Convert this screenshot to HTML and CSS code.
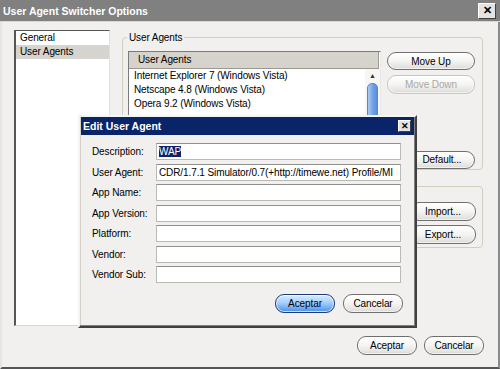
FILE: index.html
```html
<!DOCTYPE html>
<html>
<head>
<meta charset="utf-8">
<link rel="stylesheet" href="styles.css">
</head>
<body>
<div class="window">
  <div class="titlebar">
    <span class="title">User Agent Switcher Options</span>
    <span class="closebtn big">✕</span>
  </div>
  <div class="content">
    <div class="mainrow">
      <div class="sidebar">
        <div class="navitem">General</div>
        <div class="navitem selected">User Agents</div>
      </div>
      <div class="panel">
        <div class="group g1">
          <span class="legend">User Agents</span>
          <div class="listbox">
            <div class="listhead">User Agents</div>
            <div class="listbody">
              <div class="items">
                <div class="item">Internet Explorer 7 (Windows Vista)</div>
                <div class="item">Netscape 4.8 (Windows Vista)</div>
                <div class="item">Opera 9.2 (Windows Vista)</div>
              </div>
              <div class="scrollbar">
                <div class="arrow">▲</div>
                <div class="thumb"></div>
              </div>
            </div>
          </div>
          <div class="btncol">
            <button class="btn wide">Move Up</button>
            <button class="btn wide disabled">Move Down</button>
            <div class="spacer"></div>
            <button class="btn narrow">Default...</button>
          </div>
        </div>
        <div class="group g2">
          <div class="btncol">
            <button class="btn narrow">Import...</button>
            <button class="btn narrow">Export...</button>
          </div>
        </div>
      </div>
    </div>
    <div class="footer">
      <button class="btn">Aceptar</button>
      <button class="btn">Cancelar</button>
    </div>
  </div>

  <div class="dialog">
    <div class="dtitle">
      <span class="title small">Edit User Agent</span>
      <span class="closebtn small">✕</span>
    </div>
    <div class="form">
      <div class="row"><span class="label">Description:</span><div class="input"><span class="sel">WAP</span></div></div>
      <div class="row"><span class="label">User Agent:</span><div class="input">CDR/1.7.1 Simulator/0.7(+http://timewe.net) Profile/MI</div></div>
      <div class="row"><span class="label">App Name:</span><div class="input"></div></div>
      <div class="row"><span class="label">App Version:</span><div class="input"></div></div>
      <div class="row"><span class="label">Platform:</span><div class="input"></div></div>
      <div class="row"><span class="label">Vendor:</span><div class="input"></div></div>
      <div class="row"><span class="label">Vendor Sub:</span><div class="input"></div></div>
    </div>
    <div class="dfooter">
      <button class="btn primary">Aceptar</button>
      <button class="btn">Cancelar</button>
    </div>
  </div>
</div>
</body>
</html>
```

FILE: styles.css
```css
* { box-sizing: border-box; }
html, body { margin: 0; padding: 0; }
body {
  width: 500px;
  height: 369px;
  overflow: hidden;
  font-family: "Liberation Sans", Arial, sans-serif;
  font-size: 10px;
  letter-spacing: -0.1px;
  color: #000;
}
.window {
  position: relative;
  width: 500px;
  height: 369px;
  background: #f1f0ee;
  border-left: 2px solid #e6e5e2;
  border-right: 2px solid #8a8a8a;
  border-bottom: 2px solid #555;
  display: flex;
  flex-direction: column;
}
.titlebar {
  height: 22px;
  margin-left: -2px;
  margin-right: -2px;
  background: #808080;
  border-bottom: 1px solid #d8d8d8;
  display: flex;
  align-items: center;
  justify-content: space-between;
  padding: 0 4px 0 3px;
}
.title {
  color: #fff;
  font-weight: bold;
  font-size: 10.5px;
  letter-spacing: 0;
}
.closebtn {
  display: flex;
  align-items: center;
  justify-content: center;
  background: #e4e3e0;
  border: 1px solid;
  border-color: #fff #404040 #404040 #fff;
  color: #000;
  font-weight: bold;
  line-height: 1;
  letter-spacing: 0;
}
.closebtn.big { width: 18px; height: 16px; font-size: 11px; }
.closebtn.small { width: 13px; height: 12px; font-size: 9px; }

.content {
  flex: 1;
  display: flex;
  flex-direction: column;
  padding: 8px 14px 0 12px;
}
.mainrow {
  display: flex;
  gap: 12px;
}
.sidebar {
  width: 96px;
  height: 296px;
  background: #fff;
  border-style: solid;
  border-width: 1px 1px 1px 2px;
  border-color: #555 #e0dfdc #d6d5d2 #555;
}
.navitem {
  height: 14px;
  line-height: 14px;
  padding-left: 4px;
}
.navitem.selected { background: #d6d4cf; }

.panel {
  width: 361px;
  display: flex;
  flex-direction: column;
  gap: 16px;
  padding-top: 7px;
}
.group {
  position: relative;
  border: 1px solid #d0d0bf;
  border-radius: 4px;
  display: flex;
  gap: 6px;
}
.g1 { height: 133px; padding: 13px 0 0 5px; }
.g2 { height: 62px; padding: 14px 0 0 265px; }
.g2 .btncol { gap: 4px; }
.legend {
  position: absolute;
  top: -7px;
  left: 4px;
  background: #f1f0ee;
  padding: 0 2px;
  line-height: 13px;
}
.listbox {
  width: 253px;
  height: 113px;
  background: #fff;
  border-style: solid;
  border-width: 1px;
  border-color: #7a7a7a #e8e8e8 #e8e8e8 #7a7a7a;
  display: flex;
  flex-direction: column;
}
.listhead {
  height: 17px;
  line-height: 16px;
  background: #d6d3cc;
  border-bottom: 1px solid #9a9890;
  border-right: 1px solid #9a9890;
  margin-right: 1px;
  padding-left: 9px;
}
.listbody {
  flex: 1;
  display: flex;
}
.items {
  flex: 1;
  padding: 0 0 0 5px;
}
.item {
  height: 14px;
  line-height: 14px;
  white-space: nowrap;
}
.scrollbar {
  width: 15px;
  background: #f6f6f4;
  display: flex;
  flex-direction: column;
  align-items: center;
}
.arrow {
  font-size: 7px;
  color: #333;
  height: 14px;
  line-height: 14px;
}
.thumb {
  width: 11px;
  flex: 1;
  border-radius: 5px 5px 0 0;
  border: 1px solid #5a87c8;
  background: linear-gradient(to right, #a9c9f4, #6c9de6 60%, #5a8ede);
}
.btncol {
  width: 88px;
  display: flex;
  flex-direction: column;
  align-items: flex-end;
  gap: 5px;
  padding-top: 1px;
}
.spacer { height: 49px; }

.btn {
  height: 19px;
  padding: 0;
  font-family: "Liberation Sans", Arial, sans-serif;
  font-size: 10px;
  letter-spacing: -0.1px;
  color: #000;
  border: 1px solid #6f6f6f;
  border-radius: 9px;
  background: linear-gradient(to bottom, #ffffff 0%, #f4f4f2 50%, #e2e1dd 90%, #cfcdc8 100%);
  box-shadow: inset 0 0 0 1px rgba(255,255,255,0.7);
}
.btn.wide { width: 88px; }
.btn.narrow { width: 66px; }
.btn.disabled { color: #a8a8a8; border-color: #c6c6c2; }
.footer {
  display: flex;
  justify-content: flex-end;
  gap: 7px;
  padding-top: 10px;
}
.footer .btn { width: 60px; }

.dialog {
  position: absolute;
  left: 76px;
  top: 115px;
  width: 339px;
  height: 213px;
  background: #f1f0ee;
  border: 2px solid;
  border-color: #f4f4f2 #404040 #404040 #f4f4f2;
  box-shadow: inset -1px -1px 0 #808080, inset 1px 1px 0 #d4d0c8;
  display: flex;
  flex-direction: column;
}
.dtitle {
  height: 18px;
  margin: 0 1px;
  background: #0a246a;
  display: flex;
  align-items: center;
  justify-content: space-between;
  padding: 0 3px 0 2px;
}
.form {
  display: flex;
  flex-direction: column;
  gap: 3.5px;
  padding: 8px 0 0 12px;
}
.row {
  display: flex;
  align-items: center;
  height: 17px;
}
.label {
  width: 64px;
}
.input {
  width: 245px;
  height: 17px;
  background: #fff;
  border: 1px solid #b9b9b6;
  border-top-color: #8f8f8c;
  line-height: 15px;
  padding-left: 2px;
  white-space: nowrap;
  overflow: hidden;
}
.sel { background: #0a246a; color: #fff; }
.dfooter {
  display: flex;
  justify-content: flex-end;
  gap: 8px;
  padding: 11px 12px 0 0;
}
.dfooter .btn { width: 60px; }
.btn.primary {
  border-color: #1c3b7a;
  background: linear-gradient(to bottom, #d8ecff 0%, #a6d0fb 45%, #6aa8ef 80%, #4b8ee0 100%);
}
```
